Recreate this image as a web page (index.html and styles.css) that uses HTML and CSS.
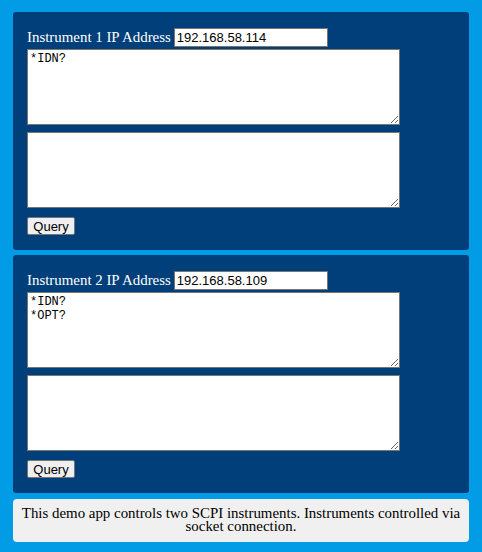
FILE: index.html
```html
<!DOCTYPE html>
<html>
<head>
<meta charset="utf-8">
<link rel="stylesheet" href="styles.css">
</head>
<body>
<div class="page">
  <section class="panel">
    <div class="row">
      <label class="label">Instrument 1 IP Address</label>
      <input class="ip" type="text" value="192.168.58.114">
    </div>
    <textarea class="cmd first">*IDN?</textarea>
    <textarea class="cmd second"></textarea>
    <button class="btn">Query</button>
  </section>
  <section class="panel">
    <div class="row">
      <label class="label">Instrument 2 IP Address</label>
      <input class="ip" type="text" value="192.168.58.109">
    </div>
    <textarea class="cmd first">*IDN?
*OPT?</textarea>
    <textarea class="cmd second"></textarea>
    <button class="btn">Query</button>
  </section>
  <footer class="footer">This demo app controls two SCPI instruments. Instruments controlled via socket connection.</footer>
</div>
</body>
</html>
```
FILE: styles.css
```css
html, body {
  margin: 0;
  padding: 0;
  background: #029be6;
}
.page {
  padding: 12px 13px;
  display: flex;
  flex-direction: column;
  gap: 5px;
}
.panel {
  background: #003f79;
  border-radius: 3px;
  padding: 16px 14px 15px;
  display: flex;
  flex-direction: column;
  align-items: flex-start;
}
.row {
  display: flex;
  align-items: center;
  height: 19px;
  gap: 3px;
}
.label {
  font-family: "Liberation Serif", serif;
  font-size: 14.9px;
  color: #ffffff;
}
.ip {
  box-sizing: border-box;
  width: 154px;
  height: 19px;
  margin: 0;
  padding: 0 2px;
  border: 1px solid #767676;
  background: #fff;
  font-family: "Liberation Sans", Arial, sans-serif;
  font-size: 13px;
  color: #000;
}
.cmd {
  box-sizing: border-box;
  width: 373px;
  height: 76px;
  margin: 0;
  padding: 2px;
  border: 1px solid #767676;
  background: #fff;
  font-family: "Liberation Mono", monospace;
  font-size: 12px;
  line-height: 14px;
  color: #000;
  resize: both;
}
.first { margin-top: 2px; }
.second { margin-top: 7px; }
.btn {
  box-sizing: border-box;
  margin-top: 9px;
  width: 48px;
  height: 18px;
  padding: 0;
  border: 1px solid #767676;
  border-radius: 2px;
  background: #efefef;
  font-family: "Liberation Sans", Arial, sans-serif;
  font-size: 13px;
  color: #000;
}
.footer {
  margin-top: 1px;
  background: #f0f0f0;
  border-radius: 4px;
  padding: 8px 4px 9px;
  text-align: center;
  font-family: "Liberation Serif", serif;
  font-size: 14.9px;
  line-height: 13px;
  color: #000;
}
```
